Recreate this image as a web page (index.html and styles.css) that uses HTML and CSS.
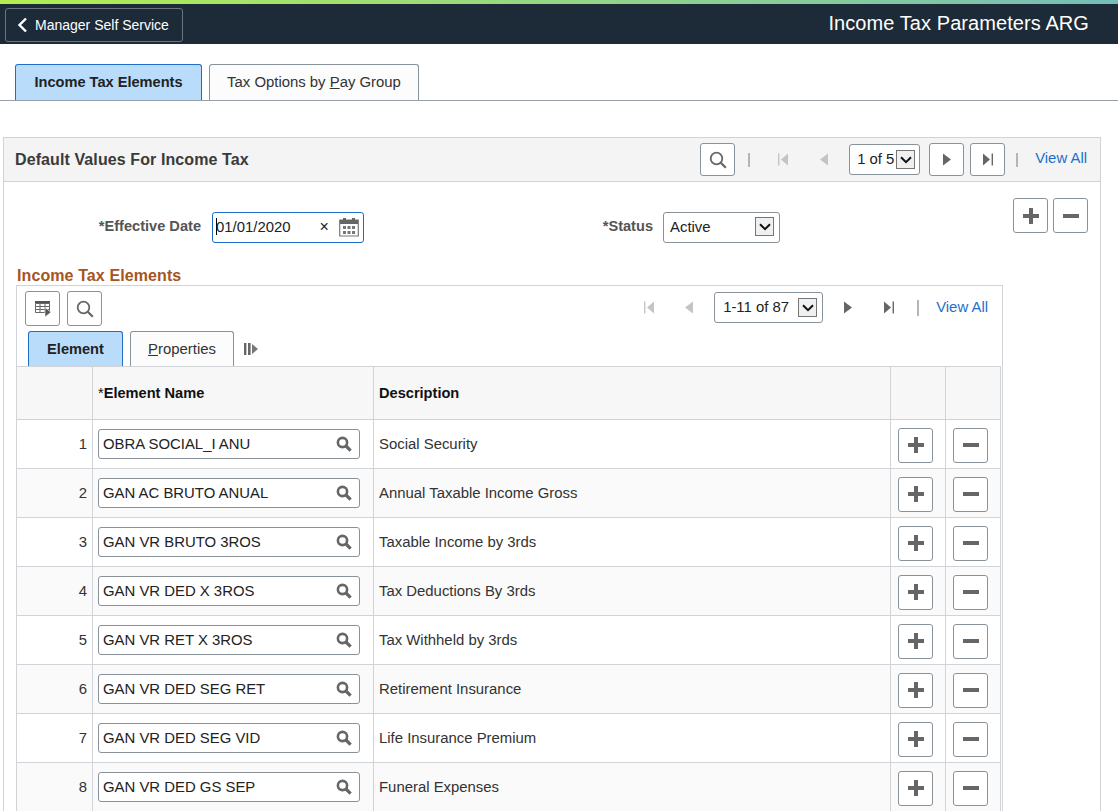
FILE: index.html
```html
<!DOCTYPE html>
<html lang="en">
<head>
    <meta charset="UTF-8">
    <title>Income Tax Parameters ARG</title>
    <link rel="stylesheet" href="styles.css">
</head>
<body>
    <svg class="defs" width="0" height="0">
        <symbol id="i-search" viewBox="0 0 20 20"><circle cx="8.5" cy="8.5" r="5.8" fill="none" stroke="currentColor" stroke-width="1.8"/><path d="M12.8 12.8l5 5" stroke="currentColor" stroke-width="2.2"/></symbol>
        <symbol id="i-lookup" viewBox="0 0 16 16"><circle cx="6.5" cy="6.5" r="4.6" fill="none" stroke="currentColor" stroke-width="2.6"/><path d="M10 10l4.6 4.6" stroke="currentColor" stroke-width="3.2"/></symbol>
        <symbol id="i-plus" viewBox="0 0 16 16"><path d="M6 0h4v6h6v4h-6v6H6v-6H0V6h6z" fill="currentColor"/></symbol>
        <symbol id="i-minus" viewBox="0 0 16 4"><rect width="16" height="4" fill="currentColor"/></symbol>
        <symbol id="i-first" viewBox="0 0 10 12"><rect width="1.4" height="12" fill="currentColor"/><path d="M10 0v12L3 6z" fill="currentColor"/></symbol>
        <symbol id="i-prev" viewBox="0 0 8 12"><path d="M8 0v12L0 6z" fill="currentColor"/></symbol>
        <symbol id="i-next" viewBox="0 0 8 12"><path d="M0 0v12l8-6z" fill="currentColor"/></symbol>
        <symbol id="i-last" viewBox="0 0 10 12"><path d="M0 0v12l7-6z" fill="currentColor"/><rect x="8.6" width="1.4" height="12" fill="currentColor"/></symbol>
        <symbol id="i-chev" viewBox="0 0 12 8"><path d="M1 1.2l5 5 5-5" fill="none" stroke="currentColor" stroke-width="2"/></symbol>
    </svg>

    <div class="topbar">
        <a class="back-btn">
            <svg class="back-chev" width="11" height="16" viewBox="0 0 11 16"><path d="M9 1.5L2.5 8 9 14.5" fill="none" stroke="currentColor" stroke-width="2.4"/></svg>
            Manager Self Service
        </a>
        <div class="page-title">Income Tax Parameters ARG</div>
    </div>

    <div class="tabs main-tabs">
        <div class="tab active"><span>Income Tax Elements</span></div>
        <div class="tab"><span>Tax Options by <u>P</u>ay Group</span></div>
    </div>

    <div class="box">
        <div class="box-header">
            <div class="box-title">Default Values For Income Tax</div>
            <div class="pager">
                <a class="btn"><svg class="ico-search"><use href="#i-search"/></svg></a>
                <span class="slot sep-a"><i class="sep"></i></span>
                <span class="slot first-a off"><svg class="ico-first"><use href="#i-first"/></svg></span>
                <span class="slot prev-a off"><svg class="ico-arrow"><use href="#i-prev"/></svg></span>
                <div class="drop drop-a"><span class="drop-text">1 of 5</span><span class="drop-arrow"><svg><use href="#i-chev"/></svg></span></div>
                <a class="btn next-a"><svg class="ico-arrow"><use href="#i-next"/></svg></a>
                <a class="btn last-a"><svg class="ico-first"><use href="#i-last"/></svg></a>
                <span class="slot sep-b"><i class="sep"></i></span>
                <a class="view-all">View All</a>
            </div>
        </div>

        <div class="form-row">
            <label class="lbl lbl-date">*Effective Date</label>
            <div class="field date-field">
                <i class="caret"></i><span>01/01/2020</span>
                <span class="clear">×</span>
                <svg class="cal" width="20" height="20" viewBox="0 0 20 20">
                    <path d="M.7 3h18.6v16H.7z" fill="none" stroke="#777" stroke-width="1.2"/>
                    <path d="M1 3h18v4H1z" fill="#666"/>
                    <path d="M4 1h3v4H4zM13 1h3v4h-3z" fill="#666"/>
                    <path d="M4 9h3v3H4zM8.5 9h3v3h-3zM13 9h3v3h-3zM4 14h3v3H4zM8.5 14h3v3h-3zM13 14h3v3h-3z" fill="#777"/>
                </svg>
            </div>
            <label class="lbl lbl-status">*Status</label>
            <div class="field status-field">Active<span class="drop-arrow"><svg><use href="#i-chev"/></svg></span></div>
            <div class="row-actions">
                <a class="btn"><svg class="ico-plus"><use href="#i-plus"/></svg></a>
                <a class="btn"><svg class="ico-minus"><use href="#i-minus"/></svg></a>
            </div>
        </div>

        <h2 class="section-title">Income Tax Elements</h2>

        <div class="grid-wrap">
            <div class="grid-tools">
                <div class="tool-btns">
                    <a class="btn">
                        <svg width="16" height="16" viewBox="0 0 16 16">
                            <path d="M0 0h15v2.5H0z" fill="#555"/>
                            <path d="M.5 2.5h14v9H.5zM.5 5.5h14M.5 8.5h14M5 2.5v9M10 2.5v9" fill="none" stroke="#666"/>
                            <path d="M10 6.5v9.5l6-4.8z" fill="#555" stroke="#fff" stroke-width=".6"/>
                        </svg>
                    </a>
                    <a class="btn"><svg class="ico-search"><use href="#i-search"/></svg></a>
                </div>
                <div class="pager pager-grid">
                    <span class="slot first-b off"><svg class="ico-first"><use href="#i-first"/></svg></span>
                    <span class="slot prev-b off"><svg class="ico-arrow"><use href="#i-prev"/></svg></span>
                    <div class="drop drop-b"><span class="drop-text">1-11 of 87</span><span class="drop-arrow"><svg><use href="#i-chev"/></svg></span></div>
                    <span class="slot next-b"><svg class="ico-arrow"><use href="#i-next"/></svg></span>
                    <span class="slot last-b"><svg class="ico-first"><use href="#i-last"/></svg></span>
                    <span class="slot sep-c"><i class="sep"></i></span>
                    <a class="view-all">View All</a>
                </div>
            </div>

            <div class="tabs grid-tabs">
                <div class="tab active"><span>Element</span></div>
                <div class="tab"><span><u>P</u>roperties</span></div>
                <svg class="show-cols" width="14" height="12" viewBox="0 0 14 12">
                    <path d="M0 0h2.4v12H0zM4 0h2.6v12H4z" fill="#666"/>
                    <path d="M8 1v10l6-5z" fill="#777"/>
                </svg>
            </div>

            <table class="grid">
                <colgroup>
                    <col class="c-num"><col class="c-name"><col class="c-desc"><col class="c-act"><col class="c-act">
                </colgroup>
                <thead>
                    <tr><th></th><th><span class="req">*</span>Element Name</th><th>Description</th><th></th><th></th></tr>
                </thead>
                <tbody id="rows"></tbody>
            </table>
        </div>
    </div>

    <script>
        const data = [
            ['OBRA SOCIAL_I ANU', 'Social Security'],
            ['GAN AC BRUTO ANUAL', 'Annual Taxable Income Gross'],
            ['GAN VR BRUTO 3ROS', 'Taxable Income by 3rds'],
            ['GAN VR DED X 3ROS', 'Tax Deductions By 3rds'],
            ['GAN VR RET X 3ROS', 'Tax Withheld by 3rds'],
            ['GAN VR DED SEG RET', 'Retirement Insurance'],
            ['GAN VR DED SEG VID', 'Life Insurance Premium'],
            ['GAN VR DED GS SEP', 'Funeral Expenses']
        ];

        // build the grid rows
        document.getElementById('rows').innerHTML = data.map((row, i) => `
            <tr>
                <td class="num">${i + 1}</td>
                <td class="name"><div class="field name-field">${row[0]}<svg class="ico-lookup"><use href="#i-lookup"/></svg></div></td>
                <td>${row[1]}</td>
                <td class="act"><a class="btn"><svg class="ico-plus"><use href="#i-plus"/></svg></a></td>
                <td class="act"><a class="btn"><svg class="ico-minus"><use href="#i-minus"/></svg></a></td>
            </tr>`).join('');
    </script>
</body>
</html>
```

FILE: styles.css
```css
* {
    margin: 0;
    padding: 0;
    box-sizing: border-box;
}

html, body {
    height: 100%;
    overflow: hidden;
}

body {
    font-family: "Liberation Sans", Arial, sans-serif;
    font-size: 14.9px;
    color: #333;
    background: #fff;
}

.defs {
    position: absolute;
}

/* Top banner */
.topbar {
    height: 44px;
    padding: 4px 29px 0 5px;
    background: linear-gradient(90deg, #b4ee50, #76bdb8) top / 100% 4px no-repeat, #1d2a38;
    display: flex;
    align-items: center;
    justify-content: space-between;
}

.back-btn {
    width: 178px;
    height: 34px;
    margin-top: 2px;
    display: flex;
    align-items: center;
    gap: 7px;
    padding-left: 11px;
    font-size: 14px;
    color: #fff;
    border: 1px solid #6b7580;
    border-radius: 3px;
}

.page-title {
    color: #fff;
    font-size: 20px;
    letter-spacing: .08px;
    margin-top: -2px;
}

/* Tabs */
.tabs {
    display: flex;
    align-items: flex-end;
}

.main-tabs {
    height: 57px;
    padding: 20px 0 0 15px;
    gap: 7px;
    border-bottom: 1px solid #97a0a8;
}

.tab {
    display: flex;
    align-items: center;
    justify-content: center;
    height: 100%;
    padding-bottom: 2px;
    background: #fcfcfc;
    border: 1px solid #8a9299;
    border-bottom: 0;
    border-radius: 3px 3px 0 0;
    color: #333;
}

.tab.active {
    background: #b9dcfb;
    border-color: #1f6fc9;
    color: #222;
    font-size: 14.6px;
    font-weight: bold;
}

.main-tabs .tab { width: 187px; }
.main-tabs .tab + .tab { width: 210px; }

/* Outer box */
.box {
    width: 1098px;
    height: 800px;
    margin: 36px 0 0 3px;
    border: 1px solid #d0d3d8;
}

.box-header {
    height: 44px;
    background: #f4f4f4;
    border-bottom: 1px solid #d0d3d8;
    display: flex;
    align-items: center;
    justify-content: space-between;
    padding: 0 13px 0 11px;
}

.box-title {
    font-size: 16px;
    font-weight: bold;
    color: #3a3a3a;
    letter-spacing: .1px;
}

/* Pagers */
.pager {
    display: flex;
    align-items: center;
}

.slot {
    display: flex;
    align-items: center;
    justify-content: center;
    height: 20px;
    color: #666;
}

.slot.off {
    color: #c4c4c4;
}

.sep {
    width: 2px;
    height: 14px;
    background: #b5b5b5;
}

.sep-a { width: 28px; }
.first-a { width: 40px; }
.prev-a { width: 42px; margin-right: 4px; }
.next-a { margin-left: 9px; }
.last-a { margin-left: 6px; }
.sep-b { width: 24px; }

.first-b { width: 30px; }
.prev-b { width: 50px; }
.next-b { width: 49px; }
.last-b { width: 34px; }
.sep-c { width: 24px; }
.sep-c .sep { height: 16px; }

.view-all {
    margin: 0 0 3px 6px;
    color: #1f6fc9;
}

.pager-grid .view-all {
    margin-bottom: 1px;
}

.ico-first { width: 10px; height: 13px; }
.ico-arrow { width: 8px; height: 13px; }
.ico-search { width: 20px; height: 20px; }
.ico-plus { width: 16px; height: 16px; }
.ico-minus { width: 16px; height: 4px; }
.ico-lookup { width: 16px; height: 16px; }

.btn {
    width: 35px;
    height: 35px;
    flex: none;
    display: flex;
    align-items: center;
    justify-content: center;
    background: #fff;
    border: 1px solid #8a9299;
    border-radius: 3px;
    color: #666;
}

.box-header .btn {
    height: 33px;
}

.drop {
    height: 31px;
    display: flex;
    align-items: center;
    justify-content: space-between;
    background: #fff;
    border: 1px solid #8a9299;
    border-radius: 3px;
    color: #222;
    line-height: 17px;
}

.drop-text {
    margin-bottom: 1px;
}

.drop-a {
    width: 71px;
    padding: 0 4px 0 7px;
}

.drop-b {
    width: 109px;
    padding: 0 5px 0 8px;
}

.drop-arrow {
    width: 19px;
    height: 19px;
    display: flex;
    align-items: center;
    justify-content: center;
    background: #f0f0f0;
    border: 1px solid #767676;
    color: #111;
}

.drop-arrow svg {
    width: 12px;
    height: 8px;
}

/* Effective date row */
.form-row {
    height: 84px;
    display: flex;
    align-items: flex-start;
    padding-top: 30px;
}

.lbl {
    color: #555;
    font-size: 14.6px;
    font-weight: bold;
    text-align: right;
    padding-top: 6px;
}

.lbl-date { width: 197px; }
.lbl-status { width: 289px; }

.field {
    height: 31px;
    display: flex;
    align-items: center;
    background: #fff;
    border: 1px solid #8a9299;
    border-radius: 3px;
    color: #222;
    padding-bottom: 2px;
}

.date-field {
    width: 152px;
    margin-left: 11px;
    padding-left: 3px;
    border-color: #1f6fc9;
}

.caret {
    width: 1px;
    height: 17px;
    margin-right: -1px;
    background: #000;
}

.clear {
    margin-left: 29px;
    font-size: 16px;
}

.cal {
    margin: 1px 0 0 10px;
}

.status-field {
    width: 117px;
    margin-left: 10px;
    padding: 0 5px 2px 6px;
    justify-content: space-between;
}

.row-actions {
    display: flex;
    gap: 5px;
    margin: -14px 0 0 233px;
}

/* Grid */
.section-title {
    font-size: 16px;
    font-weight: bold;
    color: #a5551f;
    letter-spacing: .1px;
    line-height: 17px;
    margin: 1px 0 0 13px;
}

.grid-wrap {
    width: 987px;
    margin: 1px 0 0 12px;
    border: 1px solid #d0d3d8;
}

.grid-tools {
    height: 45px;
    display: flex;
    justify-content: space-between;
    align-items: flex-start;
    padding: 5px 14px 0 8px;
}

.grid-tools .pager {
    height: 33px;
}

.tool-btns {
    display: flex;
    gap: 7px;
}

.grid-tabs {
    height: 35px;
    padding-left: 11px;
    gap: 7px;
}

.grid-tabs .tab {
    width: 95px;
    padding-bottom: 1px;
}

.grid-tabs .tab + .tab { width: 104px; }

.show-cols {
    align-self: center;
    margin-left: 3px;
}

.grid {
    width: 984px;
    margin-left: -1px;
    border-collapse: collapse;
    table-layout: fixed;
    color: #333;
}

.c-num { width: 76px; }
.c-name { width: 281px; }
.c-desc { width: 517px; }
.c-act { width: 55px; }

.grid th,
.grid td {
    border: 1px solid #d0d3d8;
    padding: 0 5px 1px;
    text-align: left;
}

.grid th {
    height: 53px;
    background: #f7f7f7;
    color: #111;
    font-size: 14.6px;
    font-weight: bold;
}

.req {
    font-weight: normal;
}

.grid td {
    height: 49px;
}

.grid tbody tr:nth-child(even) td {
    background: #fafafa;
}

.grid td.num {
    text-align: right;
}

.grid td.name {
    padding-bottom: 0;
}

.grid td.act {
    padding: 2px 7px 0;
}

.name-field {
    width: 262px;
    height: 30px;
    padding: 0 7px 0 4px;
    justify-content: space-between;
    color: #222;
}

.ico-lookup {
    color: #666;
    margin-bottom: 1px;
}
```
